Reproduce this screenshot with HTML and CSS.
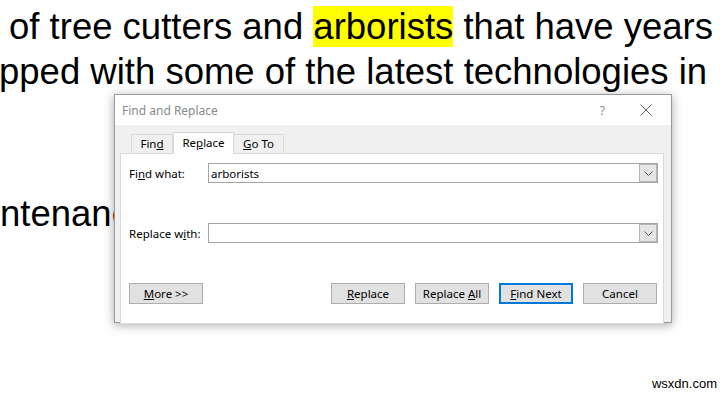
FILE: index.html
```html
<!DOCTYPE html>
<html lang="en">
<head>
  <meta charset="UTF-8">
  <title>Find and Replace</title>
  <link rel="stylesheet" href="styles.css">
</head>
<body>

<div class="doc">
  <div class="line first">of tree cutters and <span class="hit">arborists</span> that have years</div>
  <div class="line second">pped with some of the latest technologies in</div>
  <div class="line third"><span class="clip">ntenanc</span></div>
</div>

<div class="dialog">
  <div class="titlebar">
    <span class="title">Find and Replace</span>
    <span class="help">?</span>
    <svg class="close" width="12" height="12" viewBox="0 0 12 12">
      <path d="M0.5 0.5 L11.5 11.5 M11.5 0.5 L0.5 11.5" stroke="#666" stroke-width="1"/>
    </svg>
  </div>
  <div class="content">
    <div class="tabs">
      <div class="tab tab-find">Fin<u>d</u></div>
      <div class="tab active tab-replace">Re<u>p</u>lace</div>
      <div class="tab tab-goto"><u>G</u>o To</div>
    </div>
    <div class="panel">
      <div class="field">
        <label>Fi<u>n</u>d what:</label>
        <div class="combo">
          <span class="value">arborists</span>
          <span class="drop"><svg width="9" height="5" viewBox="0 0 9 5"><path d="M0.5 0.5 L4.5 4.5 L8.5 0.5" fill="none" stroke="#555" stroke-width="1"/></svg></span>
        </div>
      </div>
      <div class="field second-field">
        <label>Replace w<u>i</u>th:</label>
        <div class="combo">
          <span class="value"></span>
          <span class="drop"><svg width="9" height="5" viewBox="0 0 9 5"><path d="M0.5 0.5 L4.5 4.5 L8.5 0.5" fill="none" stroke="#555" stroke-width="1"/></svg></span>
        </div>
      </div>
      <div class="buttons">
        <button class="btn"><u>M</u>ore &gt;&gt;</button>
        <span class="spacer"></span>
        <button class="btn"><u>R</u>eplace</button>
        <button class="btn">Replace <u>A</u>ll</button>
        <button class="btn default"><u>F</u>ind Next</button>
        <button class="btn">Cancel</button>
      </div>
    </div>
  </div>
</div>

<div class="watermark">wsxdn.com</div>

</body>
</html>
```

FILE: styles.css
```css
body {
  margin: 0;
  padding: 0;
  background-color: #fff;
  font-family: "Liberation Sans", Arial, sans-serif;
  overflow: hidden;
  width: 728px;
  height: 395px;
  position: relative;
}
.doc {
  font-size: 36.5px;
  color: #000;
}
.line {
  white-space: nowrap;
  line-height: 45px;
  height: 45px;
}
.first {
  padding-left: 9px;
  padding-top: 4px;
}
.second {
  margin-left: -1px;
}
.third {
  margin-top: 97px;
}
.clip {
  display: inline-block;
  width: 118px;
  overflow: hidden;
  vertical-align: top;
}
.hit {
  background-color: #ffff00;
}

/* dialog window */
.dialog {
  position: absolute;
  left: 114px;
  top: 94px;
  width: 556px;
  height: 227px;
  border: 1px solid #9a9a9a;
  background-color: #f0f0f0;
  box-shadow: 0 2px 10px rgba(0, 0, 0, 0.35);
  font-family: "Noto Sans", "Open Sans", sans-serif;
  font-size: 11.5px;
  color: #000;
}
.titlebar {
  height: 30px;
  background-color: #fff;
  display: flex;
  align-items: center;
  padding-left: 7px;
}
.title {
  color: #8a8a8a;
  font-size: 12px;
  flex: 1;
}
.help {
  color: #8a8a8a;
  font-size: 12px;
  margin-right: 35px;
}
.close {
  margin-right: 19px;
}
.content {
  padding: 7px 7px 7px 5px;
}
.tabs {
  display: flex;
  align-items: flex-end;
  height: 21px;
  padding-left: 11px;
}
.tab {
  height: 18px;
  line-height: 18px;
  border: 1px solid #d9d9d9;
  border-bottom: none;
  text-align: center;
  background-color: #f0f0f0;
  box-sizing: content-box;
}
.tab-find {
  width: 40px;
}
.tab-replace {
  width: 59px;
}
.tab-goto {
  width: 49px;
  border-left: none;
}
.tab.active {
  background-color: #fff;
  height: 21px;
  line-height: 20px;
  margin-bottom: -1px;
  position: relative;
}
.panel {
  background-color: #fff;
  border: 1px solid #d9d9d9;
  height: 160px;
  padding: 9px 5px 0 8px;
}
.field {
  display: flex;
  align-items: center;
  height: 20px;
}
.second-field {
  margin-top: 40px;
}
.field label {
  width: 79px;
}
.combo {
  flex: 1;
  height: 18px;
  border: 1px solid #a5a5a5;
  display: flex;
  align-items: center;
}
.value {
  flex: 1;
  padding-left: 2px;
}
.drop {
  width: 16px;
  height: 16px;
  border: 1px solid #b5b5b5;
  background-color: #e5e5e5;
  display: flex;
  align-items: center;
  justify-content: center;
}
.buttons {
  display: flex;
  margin-top: 40px;
  padding-right: 1px;
}
.spacer {
  flex: 1;
}
.btn {
  width: 74px;
  height: 21px;
  padding: 0;
  border: 1px solid #adadad;
  background-color: #e1e1e1;
  font-family: "Noto Sans", "Open Sans", sans-serif;
  font-size: 11.5px;
  color: #000;
  margin-left: 10px;
}
.btn:first-child {
  margin-left: 0;
}
.btn.default {
  border: 2px solid #0078d7;
}

.watermark {
  position: absolute;
  right: 8px;
  bottom: 4px;
  background-color: #fff;
  font-size: 13px;
  padding: 0 3px;
  color: #000;
}
```
